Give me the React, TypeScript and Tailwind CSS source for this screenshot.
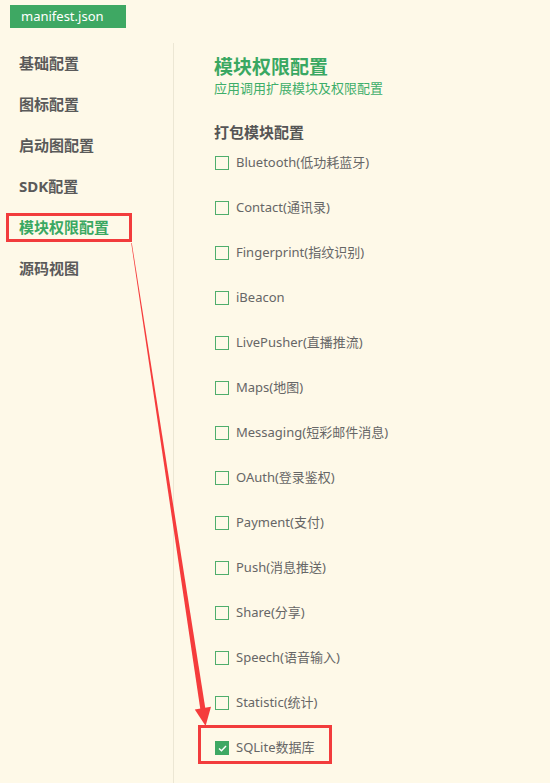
const navItems = ["基础配置", "图标配置", "启动图配置", "SDK配置", "模块权限配置", "源码视图"];

const modules = [
  "Bluetooth(低功耗蓝牙)",
  "Contact(通讯录)",
  "Fingerprint(指纹识别)",
  "iBeacon",
  "LivePusher(直播推流)",
  "Maps(地图)",
  "Messaging(短彩邮件消息)",
  "OAuth(登录鉴权)",
  "Payment(支付)",
  "Push(消息推送)",
  "Share(分享)",
  "Speech(语音输入)",
  "Statistic(统计)",
  "SQLite数据库",
];

const font = { fontFamily: "'Noto Sans', 'Noto Sans CJK SC', sans-serif" };

export default function App() {
  return (
    <div className="relative min-h-screen w-[550px] overflow-hidden bg-[#fef9e8]" style={font}>
      <div className="ml-[10px] mt-[5px] flex h-[23px] w-[116px] items-center bg-[#3ea863] pl-[11px] text-[13px] text-white">
        manifest.json
      </div>

      <div className="mt-[15px] flex">
        {/* left nav */}
        <div className="min-h-[740px] w-[174px] shrink-0 border-r border-[#ece7d4]">
          {navItems.map((item, i) => (
            <div key={item} className="flex h-[41px] items-center">
              {i === 4 ? (
                <span className="ml-[6px] flex h-[29px] w-[126px] items-center border-[3px] border-[#f23c3c] pl-[10px] text-[15px] font-bold text-[#3aa862]">
                  {item}
                </span>
              ) : (
                <span className="pl-[19px] text-[15px] font-bold text-[#5a5a5a]">{item}</span>
              )}
            </div>
          ))}
        </div>

        {/* right content */}
        <div className="pl-[40px] pt-[12px]">
          <div className="text-[19px] font-bold leading-[24px] text-[#3aa862]">模块权限配置</div>
          <div className="mt-[1px] text-[13px] leading-[17px] text-[#3eae6a]">应用调用扩展模块及权限配置</div>
          <div className="mt-[25px] text-[15px] font-bold leading-[20px] text-[#555]">打包模块配置</div>

          <div className="mt-[11px] flex flex-col gap-[25px]">
            {modules.map((m, i) => {
              const checked = i === modules.length - 1;
              return (
                <div key={m} className="relative flex h-[20px] items-center">
                  {checked ? (
                    <span className="ml-[1px] flex h-[14px] w-[14px] items-center justify-center bg-[#3ea863]">
                      <svg width="9" height="7" viewBox="0 0 9 7">
                        <path d="M1 3.5 L3.5 5.8 L8 1" fill="none" stroke="white" strokeWidth="1.4" />
                      </svg>
                    </span>
                  ) : (
                    <span className="ml-[1px] h-[14px] w-[14px] border border-[#4fae6c]" />
                  )}
                  <span className="ml-[7px] text-[13px] text-[#666]">{m}</span>
                  {checked && (
                    <span className="absolute left-[-16px] top-[-13px] h-[39px] w-[134px] border-[3px] border-[#f23c3c]" />
                  )}
                </div>
              );
            })}
          </div>
        </div>
      </div>

      {/* annotation arrow */}
      <svg className="pointer-events-none absolute left-0 top-0" width="550" height="783">
        <polygon
          points="131.2,243 131.8,243 205.5,709.6 200.5,710.4"
          fill="#f53c3c"
        />
        <polygon points="194.8,709.4 211,706.8 205.6,726" fill="#f53c3c" />
      </svg>
    </div>
  );
}
